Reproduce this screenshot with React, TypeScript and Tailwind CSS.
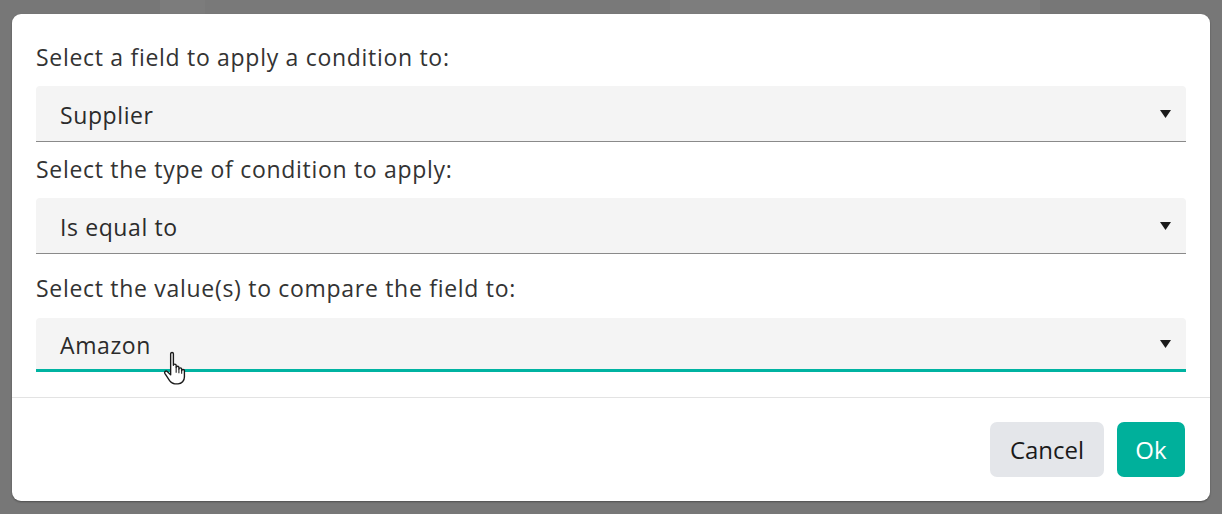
import React from "react";

function Arrow() {
  return (
    <svg width="11" height="8" viewBox="0 0 11 8" className="shrink-0">
      <polygon points="0,0 11,0 5.5,8" fill="#1a1a1a" />
    </svg>
  );
}

function Field({ value, active }: { value: string; active?: boolean }) {
  return (
    <div
      className={
        "flex items-center justify-between rounded-t-[4px] bg-[#f4f4f4] pl-6 pr-[15px] text-[23px] tracking-[0.6px] text-[#2b2b2b] " +
        (active ? "h-[54px] border-b-[3px] border-[#00b3a1]" : "h-[56px] border-b border-[#8a8a8a]")
      }
    >
      <span className="pt-1 leading-none">{value}</span>
      <Arrow />
    </div>
  );
}

function Hand() {
  return (
    <svg width="28" height="36" viewBox="0 0 26 34" className="absolute left-[163px] top-[350px]">
      <path
        d="M7 3.5c0-1.5 2.6-1.5 2.6 0v11c0-1.5 2.6-1.5 2.6 0v2c0-1.5 2.6-1.5 2.6 0v1.5c0-1.5 2.6-1.5 2.6 0v1.5c0-1.5 2.6-1.5 2.6 0v6c0 3.5-2.5 6.5-6 6.5h-3c-2.5 0-3.8-1.3-5-3l-4.5-7c-0.8-1.4 1-2.8 2.3-1.7l3.2 3.2z"
        fill="#ffffff"
        stroke="#1a1a1a"
        strokeWidth="1.3"
        strokeLinejoin="round"
      />
      <path d="M12.2 16.5v5M14.8 18v4M17.4 19.5v3" stroke="#1a1a1a" strokeWidth="1" />
    </svg>
  );
}

const label = "h-[28px] text-[23px] leading-[28px] tracking-[0.7px] text-[#333333]";

export default function App() {
  return (
    <div
      className="relative h-[514px] w-[1222px] overflow-hidden bg-[#777777]"
      style={{ fontFamily: "'Open Sans', 'Noto Sans', sans-serif" }}
    >
      <div className="flex h-[16px] w-full">
        <div className="w-[160px] bg-[#777777]" />
        <div className="w-[45px] bg-[#7c7c7c]" />
        <div className="w-[465px] bg-[#797979]" />
        <div className="w-[370px] bg-[#7d7d7d]" />
        <div className="flex-1 bg-[#777777]" />
      </div>
      <div className="absolute left-[12px] top-[14px] flex h-[487px] w-[1198px] flex-col rounded-[9px] bg-white shadow-[0_1px_2px_rgba(0,0,0,0.35)]">
        <div className="flex flex-col px-6 pt-[29px]">
          <div className={label}>Select a field to apply a condition to:</div>
          <div className="mt-[15px]">
            <Field value="Supplier" />
          </div>
          <div className={"mt-[13px] " + label}>Select the type of condition to apply:</div>
          <div className="mt-[15px]">
            <Field value="Is equal to" />
          </div>
          <div className={"mt-[20px] " + label}>Select the value(s) to compare the field to:</div>
          <div className="mt-[16px]">
            <Field value="Amazon" active />
          </div>
        </div>
        <div className="mt-[25px] h-px bg-[#e3e3e3]" />
        <div className="flex flex-1 items-center justify-end gap-[13px] pr-[25px]">
          <button className="h-[55px] w-[114px] rounded-[7px] bg-[#e4e6ea] text-[24px] text-[#1a1a1a]">Cancel</button>
          <button className="h-[55px] w-[68px] rounded-[7px] bg-[#00b09b] text-[24px] text-white">Ok</button>
        </div>
      </div>
      <Hand />
    </div>
  );
}
